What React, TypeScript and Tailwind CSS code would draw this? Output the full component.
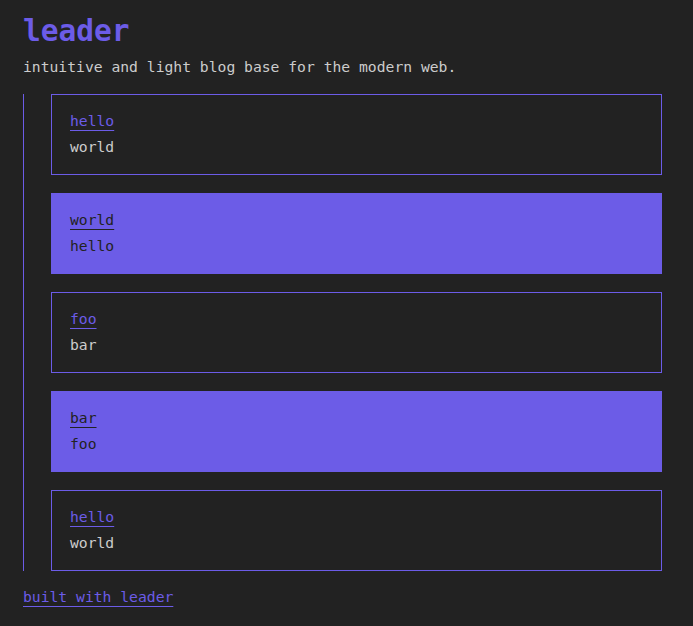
const posts = [
  { title: 'hello', body: 'world', filled: false },
  { title: 'world', body: 'hello', filled: true },
  { title: 'foo', body: 'bar', filled: false },
  { title: 'bar', body: 'foo', filled: true },
  { title: 'hello', body: 'world', filled: false },
];

export default function App() {
  return (
    <div
      className="min-h-screen bg-[#222222] pl-[23px] pr-[31px] pt-[13px] text-[14.7px] text-[#cccccc]"
      style={{ fontFamily: '"DejaVu Sans Mono", "Liberation Mono", monospace' }}
    >
      <h1 className="text-[29.5px] font-bold leading-[36px] text-[#6c5ce7]">leader</h1>
      <p className="mt-[6px] leading-[24px]">intuitive and light blog base for the modern web.</p>

      <div className="mt-[15px] flex flex-col gap-[18px] border-l border-[#6c5ce7] pl-[27px]">
        {posts.map((post, idx) => (
          <div
            key={idx}
            className={
              post.filled
                ? 'h-[81px] border border-[#6c5ce7] bg-[#6c5ce7] px-[18px] pt-[13px] leading-[26px] text-[#222222]'
                : 'h-[81px] border border-[#6c5ce7] px-[18px] pt-[13px] leading-[26px]'
            }
          >
            <a
              href="#"
              className={
                post.filled
                  ? 'text-[#222222] underline decoration-1 underline-offset-[4px]'
                  : 'text-[#6c5ce7] underline decoration-1 underline-offset-[4px]'
              }
            >
              {post.title}
            </a>
            <div>{post.body}</div>
          </div>
        ))}
      </div>

      <footer className="mt-[14px] pb-[17px] leading-[24px]">
        <a href="#" className="text-[#6c5ce7] underline decoration-1 underline-offset-[4px]">
          built with leader
        </a>
      </footer>
    </div>
  );
}
